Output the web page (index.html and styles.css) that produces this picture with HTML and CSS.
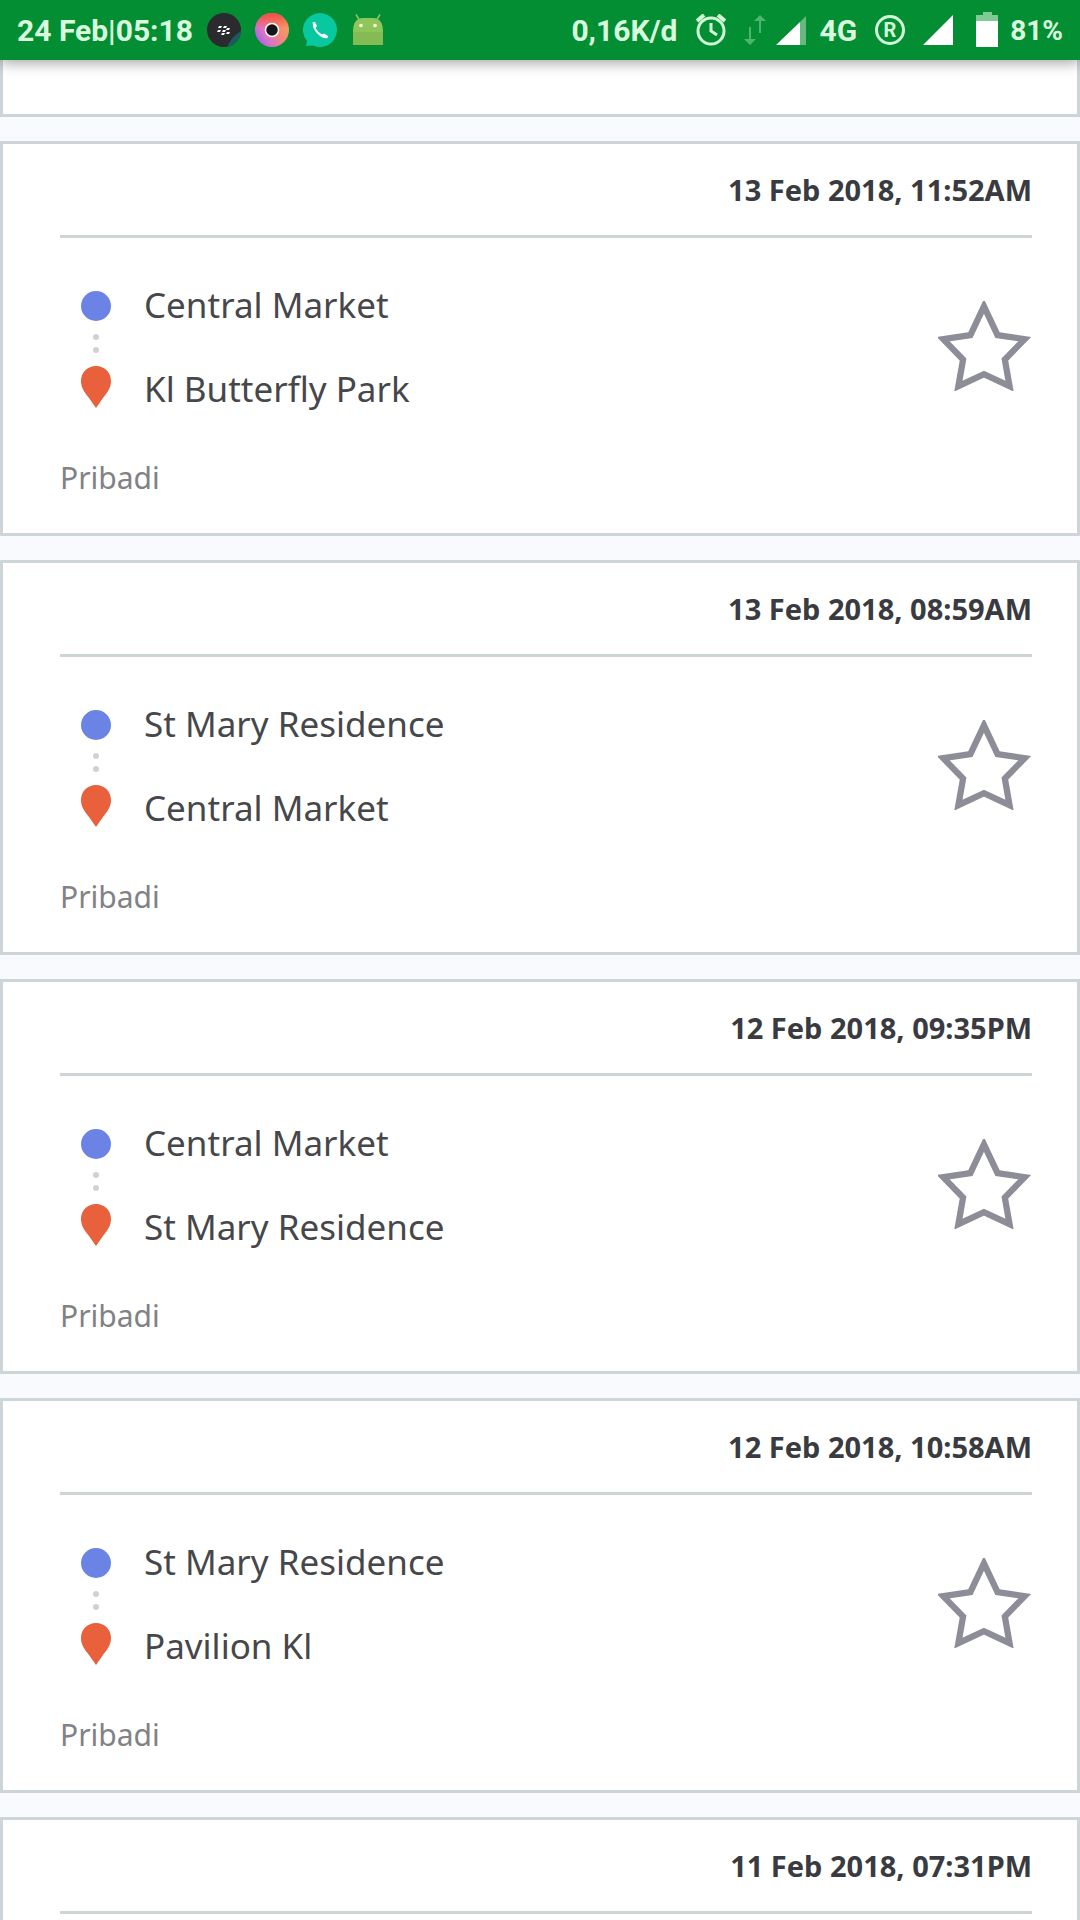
FILE: index.html
```html
<!DOCTYPE html>
<html lang="id">
<head>
    <meta charset="UTF-8">
    <meta name="viewport" content="width=device-width, initial-scale=1.0">
    <title>Riwayat</title>
    <link rel="stylesheet" href="styles.css">
</head>
<body>
    <svg class="sprite" aria-hidden="true">
        <symbol id="route" viewBox="0 0 30 118">
            <circle cx="15" cy="15" r="15" fill="#6c83e6"/>
            <circle cx="15" cy="46" r="3" fill="#cfd2d4"/>
            <circle cx="15" cy="59" r="3" fill="#cfd2d4"/>
            <path d="M15 75C6.500 75 0 81.500 0 90C0 97 4 102 8 107L15 117L22 107C26 102 30 97 30 90C30 81.500 23.500 75 15 75Z" fill="#e8603c"/>
        </symbol>
        <symbol id="star" viewBox="3 1 90 86">
            <path d="M47 6L60 33.500L86 37.500L67 57L71.500 82.500L47 71L22.500 82.500L27 57L8 37.500L34 33.500Z" fill="none" stroke="#8c8d96" stroke-width="6"/>
        </symbol>
    </svg>

    <div class="app">
        <header class="status-bar">
            <div class="status-left">
                <span class="clock">24 Feb|05:18</span>
                <svg class="notif" viewBox="0 0 34 34" aria-hidden="true">
                    <circle cx="17" cy="17" r="17" fill="#2b2a2e"/>
                    <path d="M34 18A17 17 0 0 1 20 34Q25 23 34 18Z" fill="#1d5a60"/>
                    <path d="M12 13h3l-1 2h-3zM17 13h3l-1 2h-3zM11 17h3l-1 2h-3zM16 17h3l-1 2h-3zM20 15h3l-1 2h-3zM15 20h3l-1 2h-3zM20 19h3l-1 2h-3z" fill="#fff"/>
                </svg>
                <svg class="notif" viewBox="0 0 34 34" aria-hidden="true">
                    <defs>
                        <linearGradient id="ring" x1="0" y1="1" x2="1" y2="0.300">
                            <stop offset="0" stop-color="#8a55ff"/>
                            <stop offset="0.350" stop-color="#d873c8"/>
                            <stop offset="0.700" stop-color="#f58a70"/>
                            <stop offset="1" stop-color="#f6a05c"/>
                        </linearGradient>
                        <linearGradient id="ringTop" x1="0" y1="0" x2="0" y2="1">
                            <stop offset="0" stop-color="#f04848"/>
                            <stop offset="0.450" stop-color="#f04848" stop-opacity="0"/>
                        </linearGradient>
                    </defs>
                    <circle cx="17" cy="17" r="17" fill="url(#ring)"/>
                    <circle cx="17" cy="17" r="17" fill="url(#ringTop)"/>
                    <circle cx="17" cy="17" r="6.500" fill="#161418" stroke="#fff" stroke-width="1.500"/>
                </svg>
                <svg class="notif" viewBox="0 0 34 34" aria-hidden="true">
                    <path d="M17 0A17 17 0 1 1 10 32.500L3 33L4 28A17 17 0 0 1 17 0Z" fill="#08c8a0"/>
                    <path d="M9.500 9.500L12 9L14 13L12.500 15Q15 19.500 19 21.500L21 20.500L25 23L24.500 25Q21 26 17 23Q10 18 9.500 9.500Z" fill="#fff"/>
                </svg>
                <svg class="notif" viewBox="0 0 34 34" aria-hidden="true">
                    <path d="M5 1.500L9 8M29 1.500L25 8" stroke="#8fc65a" stroke-width="1.500"/>
                    <path d="M2 19Q2 5 12 5H22Q32 5 32 19V32H2Z" fill="#8fc65a"/>
                    <path d="M2 19H32V32H2Z" fill="#84bb55"/>
                    <circle cx="10" cy="12.500" r="1.800" fill="#fff"/>
                    <circle cx="24" cy="12.500" r="1.800" fill="#fff"/>
                </svg>
            </div>
            <div class="status-right">
                <span>0,16K/d</span>
                <svg width="46" height="32" viewBox="0 0 46 32" aria-hidden="true">
                    <g fill="none" stroke="#d2fbd8">
                        <circle cx="23" cy="17" r="13" stroke-width="3"/>
                        <path d="M23 9V17L29 21" stroke-width="3"/>
                        <path d="M9 7L16 1M37 7L30 1" stroke-width="4"/>
                    </g>
                </svg>
                <svg width="22" height="32" viewBox="0 0 22 32" aria-hidden="true">
                    <path d="M5 13H7V25H12L6 31L0 25H5ZM15 19H17V7H22L16 1L10 7H15Z" fill="#4fb56c"/>
                </svg>
                <svg width="34" height="32" viewBox="0 0 34 32" aria-hidden="true">
                    <path d="M24 8L30 2V31H24Z" fill="#66b97f"/>
                    <path d="M0 31L24 8V31Z" fill="#fff"/>
                </svg>
                <span>4G</span>
                <svg width="38" height="32" viewBox="0 0 38 32" aria-hidden="true">
                    <circle cx="23" cy="16" r="13.500" fill="none" stroke="#d2fbd8" stroke-width="3"/>
                    <text class="roaming" x="23" y="23" text-anchor="middle">R</text>
                </svg>
                <svg width="51" height="32" viewBox="0 0 51 32" aria-hidden="true">
                    <path d="M8 31L38 1V31Z" fill="#fff"/>
                </svg>
                <svg width="24" height="36" viewBox="0 0 24 36" aria-hidden="true">
                    <path d="M7 0H16V3H22V9H0V3H7Z" fill="#7fcb94"/>
                    <path d="M0 9H22V35H0Z" fill="#fff"/>
                </svg>
                <span class="battery-level">81%</span>
            </div>
        </header>

        <main class="bookings">
            <div class="card card-end"></div>

            <article class="card">
                <time class="date">13 Feb 2018, 11:52AM</time>
                <div class="trip">
                    <svg class="route" aria-hidden="true"><use href="#route"/></svg>
                    <div class="places">
                        <p>Central Market</p>
                        <p>Kl Butterfly Park</p>
                    </div>
                    <button class="favorite" aria-label="Favorit"><svg class="star"><use href="#star"/></svg></button>
                </div>
                <p class="tag">Pribadi</p>
            </article>

            <article class="card">
                <time class="date">13 Feb 2018, 08:59AM</time>
                <div class="trip">
                    <svg class="route" aria-hidden="true"><use href="#route"/></svg>
                    <div class="places">
                        <p>St Mary Residence</p>
                        <p>Central Market</p>
                    </div>
                    <button class="favorite" aria-label="Favorit"><svg class="star"><use href="#star"/></svg></button>
                </div>
                <p class="tag">Pribadi</p>
            </article>

            <article class="card">
                <time class="date">12 Feb 2018, 09:35PM</time>
                <div class="trip">
                    <svg class="route" aria-hidden="true"><use href="#route"/></svg>
                    <div class="places">
                        <p>Central Market</p>
                        <p>St Mary Residence</p>
                    </div>
                    <button class="favorite" aria-label="Favorit"><svg class="star"><use href="#star"/></svg></button>
                </div>
                <p class="tag">Pribadi</p>
            </article>

            <article class="card">
                <time class="date">12 Feb 2018, 10:58AM</time>
                <div class="trip">
                    <svg class="route" aria-hidden="true"><use href="#route"/></svg>
                    <div class="places">
                        <p>St Mary Residence</p>
                        <p>Pavilion Kl</p>
                    </div>
                    <button class="favorite" aria-label="Favorit"><svg class="star"><use href="#star"/></svg></button>
                </div>
                <p class="tag">Pribadi</p>
            </article>

            <article class="card card-start">
                <time class="date">11 Feb 2018, 07:31PM</time>
            </article>
        </main>
    </div>
</body>
</html>
```

FILE: styles.css
```css
* {
    box-sizing: border-box;
}

body {
    margin: 0;
    font-family: 'Noto Sans', sans-serif;
    background: #f8fafd;
    color: #46474a;
}

p {
    margin: 0;
}

.sprite {
    display: none;
}

.app {
    height: 100vh;
    display: flex;
    flex-direction: column;
    overflow: hidden;
}

/* status bar */
.status-bar {
    flex: none;
    height: 60px;
    padding: 0 17px;
    display: flex;
    justify-content: space-between;
    align-items: center;
    background: #038e33;
    color: #d8fcdd;
    font-family: Roboto, sans-serif;
    font-size: 30px;
    font-weight: 700;
    box-shadow: 0 2px 14px rgba(0, 0, 0, 0.4);
    z-index: 1;
}

.status-left {
    display: flex;
    align-items: center;
    gap: 14px;
}

.status-right {
    display: flex;
    align-items: center;
    gap: 10px;
}

.notif {
    width: 34px;
    height: 34px;
}

.roaming {
    font-size: 20px;
    fill: #d2fbd8;
}

.battery-level {
    font-size: 28px;
}

/* booking list */
.bookings {
    flex: 1;
    display: flex;
    flex-direction: column;
    gap: 24px;
}

.card {
    flex: none;
    padding: 0 45px 40px 57px;
    border: 3px solid #cdd5d9;
    background: #fff;
}

.card-end {
    height: 57px;
    padding: 0;
    border-top: none;
}

.card-start {
    flex: 1 0 auto;
    padding-bottom: 0;
    border-bottom: none;
}

.date {
    display: block;
    height: 94px;
    line-height: 91px;
    border-bottom: 3px solid #cdd5d7;
    text-align: right;
    font-size: 29px;
    font-weight: 700;
    color: #393b41;
}

.trip {
    display: flex;
    align-items: flex-start;
    padding: 25px 0 32px 21px;
}

.route {
    width: 30px;
    height: 118px;
    margin-top: 28px;
}

.places {
    flex: 1;
    padding-left: 33px;
    font-size: 35px;
    line-height: 84px;
}

.favorite {
    margin-top: 38px;
    padding: 0;
    border: none;
    background: none;
    cursor: pointer;
}

.star {
    display: block;
    width: 94px;
    height: 90px;
}

.tag {
    font-size: 30px;
    line-height: 30px;
    color: #818286;
}
```
